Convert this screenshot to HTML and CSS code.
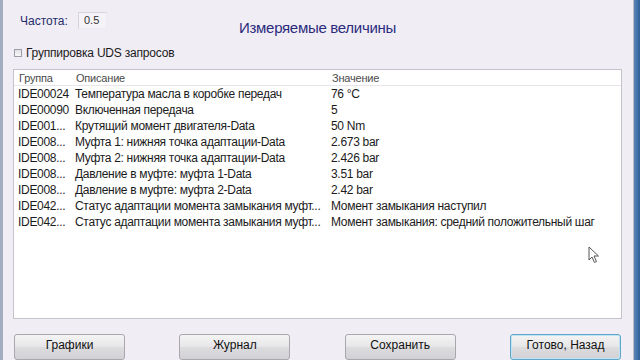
FILE: index.html
```html
<!DOCTYPE html>
<html>
<head>
  <title>Измеряемые величины</title>
  <link rel="stylesheet" href="styles.css">
</head>
<body>
  <div class="window">
    <div class="frameLeft"></div>
    <div class="content">
      <div class="topRow">
        <div class="freq">
          <span class="freqLabel">Частота:</span>
          <span class="freqBox">0.5</span>
        </div>
        <div class="title">Измеряемые величины</div>
        <div></div>
      </div>

      <label class="groupCheck">
        <span class="checkBox"></span>
        Группировка UDS запросов
      </label>

      <div class="listBox">
        <div class="listHeader">
          <span class="colGroup">Группа</span>
          <span class="colDesc">Описание</span>
          <span class="colValue">Значение</span>
        </div>
        <div class="listRow"><span class="colGroup">IDE00024</span><span class="colDesc">Температура масла в коробке передач</span><span class="colValue">76 °C</span></div>
        <div class="listRow"><span class="colGroup">IDE00090</span><span class="colDesc">Включенная передача</span><span class="colValue">5</span></div>
        <div class="listRow"><span class="colGroup">IDE001...</span><span class="colDesc">Крутящий момент двигателя-Data</span><span class="colValue">50 Nm</span></div>
        <div class="listRow"><span class="colGroup">IDE008...</span><span class="colDesc">Муфта 1: нижняя точка адаптации-Data</span><span class="colValue">2.673 bar</span></div>
        <div class="listRow"><span class="colGroup">IDE008...</span><span class="colDesc">Муфта 2: нижняя точка адаптации-Data</span><span class="colValue">2.426 bar</span></div>
        <div class="listRow"><span class="colGroup">IDE008...</span><span class="colDesc">Давление в муфте: муфта 1-Data</span><span class="colValue">3.51 bar</span></div>
        <div class="listRow"><span class="colGroup">IDE008...</span><span class="colDesc">Давление в муфте: муфта 2-Data</span><span class="colValue">2.42 bar</span></div>
        <div class="listRow"><span class="colGroup">IDE042...</span><span class="colDesc">Статус адаптации момента замыкания муфт...</span><span class="colValue">Момент замыкания наступил</span></div>
        <div class="listRow"><span class="colGroup">IDE042...</span><span class="colDesc">Статус адаптации момента замыкания муфт...</span><span class="colValue">Момент замыкания: средний положительный шаг</span></div>

        <svg class="cursor" width="12" height="18" viewBox="0 0 12 18">
          <path d="M1 1 L1 14 L4 11 L6.5 16.5 L8.5 15.5 L6 10 L10.5 10 Z" fill="#fff" stroke="#555" stroke-width="1"/>
        </svg>
      </div>

      <div class="buttonRow">
        <button class="winButton">Графики</button>
        <button class="winButton">Журнал</button>
        <button class="winButton">Сохранить</button>
        <button class="winButton defaultButton">Готово, Назад</button>
      </div>
    </div>
    <div class="frameRight"></div>
  </div>
</body>
</html>
```

FILE: styles.css
```css
html, body {
  margin: 0;
  padding: 0;
}

body {
  width: 640px;
  height: 360px;
  overflow: hidden;
  background-color: #f1edf5;
  font-family: "Liberation Sans", Arial, sans-serif;
  font-size: 12px;
  color: #1b1b1b;
}

.window {
  display: flex;
  height: 360px;
}

.frameLeft {
  width: 3px;
  background-color: #a3adc0;
}

.frameRight {
  width: 6px;
  border-left: 1px solid #b9b9c4;
  background: linear-gradient(to right, #5b86b8, #2f5f98);
}

.content {
  flex: 1;
  padding: 0 11px 0 10px;
  display: flex;
  flex-direction: column;
}

.topRow {
  display: grid;
  grid-template-columns: 1fr auto 1fr;
  height: 38px;
}

.freq {
  display: flex;
  align-items: center;
  height: 17px;
  margin-top: 12px;
  padding-left: 7px;
}

.freqLabel {
  color: #1f2d6b;
  font-size: 12px;
  width: 58px;
}

.freqBox {
  display: inline-block;
  width: 22px;
  height: 15px;
  line-height: 15px;
  padding-left: 5px;
  border: 1px solid #d6d3dc;
  border-right-color: #eeeaf2;
  border-bottom-color: #eeeaf2;
  background-color: #f6f3f8;
  color: #333;
  font-size: 11px;
}

.title {
  color: #2a2b7c;
  font-size: 15px;
  letter-spacing: -0.3px;
  padding-top: 19px;
}

.groupCheck {
  display: flex;
  align-items: center;
  height: 16px;
  margin-top: 8px;
  padding-left: 1px;
  font-size: 12px;
  letter-spacing: -0.2px;
}

.checkBox {
  width: 6px;
  height: 6px;
  margin-right: 4px;
  border: 1px solid #9c9ca6;
  background: linear-gradient(#e0e0e6, #f8f8fa);
}

.listBox {
  position: relative;
  margin-top: 8px;
  height: 251px;
  background-color: #fff;
  border: 1px solid #c6c2cc;
}

.listHeader {
  display: flex;
  height: 13px;
  padding-top: 2px;
  line-height: 13px;
  font-size: 11px;
  color: #4a4a4a;
  letter-spacing: -0.2px;
  border-bottom: 1px solid #e8e4ec;
}

.listRow {
  display: flex;
  height: 16px;
  line-height: 16px;
  white-space: nowrap;
  letter-spacing: -0.3px;
}

.listHeader .colGroup {
  padding-left: 5px;
}

.colGroup {
  width: 57px;
  padding-left: 4px;
}

.colDesc {
  width: 256px;
}

.colValue {
  flex: 1;
}

.cursor {
  position: absolute;
  left: 574px;
  top: 176px;
}

.buttonRow {
  display: flex;
  justify-content: space-between;
  margin-top: 15px;
  padding: 0 1px 0 1px;
}

.winButton {
  width: 111px;
  height: 26px;
  padding: 0 0 4px 0;
  font-family: "Liberation Sans", Arial, sans-serif;
  font-size: 12px;
  color: #111;
  border: 1px solid #a9a7ad;
  border-radius: 3px;
  background: linear-gradient(#f4f4f5, #e6e6e8 50%, #dcdcdf 51%, #d2d2d6);
}

.defaultButton {
  border-color: #5fa6c8;
  box-shadow: inset 0 0 0 1px #bfe3f2;
}
```
